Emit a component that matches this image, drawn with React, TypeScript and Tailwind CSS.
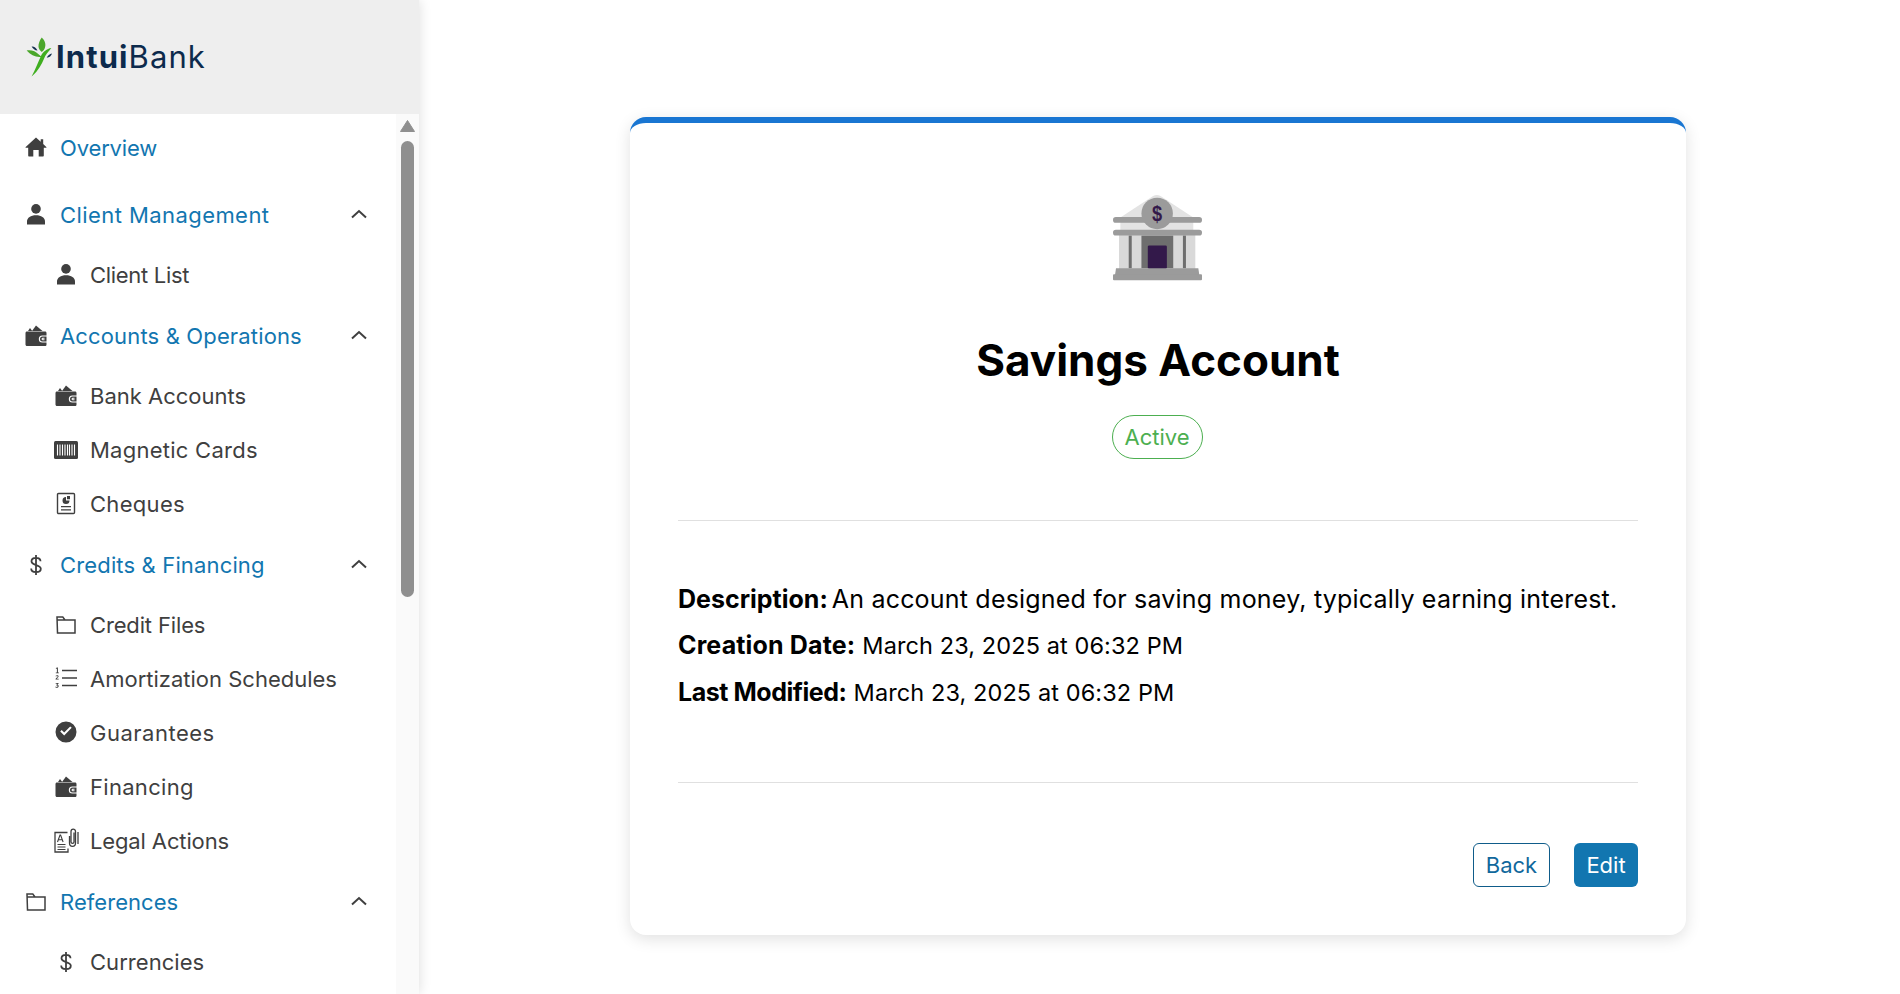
import React from "react";

const I = ({ children, w = 24, vb = "0 0 24 24" }: { children: React.ReactNode; w?: number; vb?: string }) => (
  <svg width={w} height={w} viewBox={vb} className="text-[#3f3f3f]" fill="currentColor">{children}</svg>
);
const Home = () => <I w={26}><path d="M12 2.500 1.700 11.900c-.4.4-.1.9.3.9H4.200v7.700c0 .6.400 1 1 1h4.100v-6.500h5.400v6.500h4.100c.6 0 1-.4 1-1V12.800h2.200c.4 0 .7-.5.3-.9l-3.100-2.800V4.200h-2.500v2.600Z" /></I>;
const Person = () => <I><circle cx="12" cy="6.900" r="4.800" /><path d="M3 22.500v-3.200c0-3.400 3.800-6 9-6s9 2.600 9 6v3.200Z" /></I>;
const Wallet = () => <I w={25}><path d="M4 7.500 6 4.500l2.300 3Z" /><path d="M8 7.500 12 2l6.500 5.500Z" /><path fillRule="evenodd" d="M3 8h18c1 0 1.500.6 1.500 1.500v2.500h-4.200a3.500 3.500 0 0 0 0 7h4.200v2c0 1-.6 1.500-1.500 1.500H3c-.9 0-1.500-.6-1.500-1.500V9.500C1.500 8.600 2.100 8 3 8Z" /><path fillRule="evenodd" d="M18.500 13h4v5h-4a2.500 2.500 0 0 1 0-5Zm.3 1.300a1.200 1.200 0 1 0 0 2.400h1.700v-.9h-1.700a.3.3 0 0 1 0-.6h1.700v-.9Z" /></I>;
const Barcode = () => (
  <svg width="24" height="18" viewBox="0 0 24 18" className="mt-[1px] text-[#3f3f3f]"><rect width="24" height="18" rx="1.500" fill="currentColor" /><path d="M3.500 3.500v11M6 3.500v11M8.500 3.500v11M11 3.500v11M13.500 3.500v11M15.500 3.500v11M18 3.500v11M20.500 3.500v11" stroke="#fff" strokeWidth="1.100" /></svg>
);
const Cheque = () => <I><g transform="translate(0 1)"><rect x="3.500" y="1.500" width="17" height="20" rx="1" fill="none" stroke="currentColor" strokeWidth="1.400" /><path d="M12 5a3.500 3.500 0 1 0 3.500 3.500H12Z" /><path d="M13 4h3v3.200h-3zM7 14h10v1.300H7zM7 17.200h10v1.300H7z" /></g></I>;
const Folder = () => <I><path d="M3.500 21h17.500V8H11L8.800 5H3Zm0-13H11" fill="none" stroke="currentColor" strokeWidth="1.500" /></I>;
const Dollar = () => <I><g transform="translate(0 1)"><path d="M16.500 8.200c0-2-1.900-3.400-4.500-3.400S7.500 6.200 7.500 8.300c0 4.600 9.300 2.900 9.300 7.500 0 2-2 3.400-4.800 3.400s-4.800-1.500-4.800-3.600M12 2v20" fill="none" stroke="currentColor" strokeWidth="1.800" /></g></I>;
const ListNum = () => <I vb="0 0 24 24"><path d="M8 3.800h15v1.500H8zM8 11.300h15v1.500H8zM8 18.800h15v1.500H8z" /><path d="M2.800 1.500h1.100v5h1v.8H1.800v-.8h1.100V2.600l-1 .3v-.7ZM1.700 9.800c.5-.6 2.700-.9 2.900.5.100 1-1.500 1.700-1.800 2.500h1.900v.8H1.500c0-1.800 2.100-2.300 2.100-3.200 0-.7-1.200-.5-1.900 0ZM1.700 17h2.900v.6l-1.200 1.200c1.900.2 1.700 3-.4 3-.6 0-1.100-.1-1.500-.4v-.8c1 .7 2.300.4 2.200-.5 0-.6-.8-.7-1.400-.6v-.6l1-1.100H1.700Z" /></I>;
const Check = () => <I><path fillRule="evenodd" d="M12 1.500a10.500 10.500 0 1 1 0 21 10.500 10.500 0 0 1 0-21Zm5.700 6.300-1.500-1.400-6 6-2.500-2.500-1.500 1.500 4 4Z" /></I>;
const Legal = () => (
  <svg width="25" height="25" viewBox="0 0 26 26" className="shrink-0 scale-[1.04] text-[#3f3f3f]" fill="none" stroke="currentColor"><path d="M14 5H1.500v19.500h13V21" strokeWidth="1.300" /><path d="M4 14.500 6.500 7.500h.6l2.500 7M5 12.200h3.500" strokeWidth="1.100" /><path d="M4 17h8M4 19.500h8M4 22h8" strokeWidth="1.200" /><path d="M16 8.500v7c0 4.500 6 4.500 6 0V4c0-3.200-4.500-3.200-4.500 0v10.500c0 1.700 3 1.700 3 0V5M24.500 4.500v12" strokeWidth="1.300" /></svg>
);
const Chevron = () => (
  <svg width="22" height="22" viewBox="0 0 22 22" fill="none" stroke="#3f3f3f" strokeWidth="2"><path d="m4 14.500 7-6.500 7 6.500" /></svg>
);

const Head = ({ icon, label, t, chevron = true }: { icon: React.ReactNode; label: string; t: string; chevron?: boolean }) => (
  <div className="flex h-[54px] items-center pl-[24px] pr-[26px]">
    <span className="flex w-[24px] justify-center">{icon}</span>
    <span className={`ml-[12px] pt-[2px] text-[#1276b0] text-[22px] ${t}`}>{label}</span>
    {chevron && <span className="ml-auto"><Chevron /></span>}
  </div>
);
const Sub = ({ icon, label, t }: { icon: React.ReactNode; label: string; t: string }) => (
  <div className="flex h-[54px] items-center pl-[54px]">
    <span className="flex w-[24px] justify-center">{icon}</span>
    <span className={`ml-[12px] pt-[2px] text-[#3f3f3f] text-[22px] ${t}`}>{label}</span>
  </div>
);
const Group = ({ icon, label, t, children }: { icon: React.ReactNode; label: string; t: string; children: React.ReactNode }) => (
  <div className="mb-[7px]">
    <Head icon={icon} label={label} t={t} />
    <div className="mt-[6px]">{children}</div>
  </div>
);

const Logo = () => (
  <div className="flex items-center pl-[25px]">
    <svg width="28" height="42" viewBox="40 48 85 125">
      <path d="M91 51c9 9 14 20 9 33-2 6-6 8-9 11-4-3-9-8-10-15-1-11 4-21 10-29Z" fill="#4aa62a" />
      <path d="M45 91c13-3 27 2 37 12 3 3 6 5 9 7-17 3-33-5-46-19Z" fill="#4aa62a" />
      <path d="M120 83c-14 2-25 11-32 25-7 16-16 39-28 62 22-19 31-40 37-53 5-14 14-23 23-34Z" fill="#3fae1f" />
      <path d="M60 79c7-1 13 3 18 12-8 0-14-5-18-12ZM122 100c-2 7-8 12-16 13 3-7 9-12 16-13Z" fill="#15304f" />
    </svg>
    <span className="ml-[3px] text-[31px] text-[#0c2a4c] tracking-[1.1px]"><b className="font-bold">Intui</b><span className="font-normal">Bank</span></span>
  </div>
);

const Bank = () => (
  <svg width="89" height="87" viewBox="190 70 266 260">
    <path d="M212 140 310 76q11-6 22 0l98 64v40H212Z" fill="#e3e3e3" />
    <rect x="208" y="190" width="228" height="104" fill="#d9d9d9" />
    <path d="M237 194h9v98h-9ZM399 194h9v98h-9ZM275 194h95v98h-95Z" fill="#6e6e6e" />
    <rect x="294" y="224" width="57" height="70" rx="4" fill="#33194a" />
    <rect x="190" y="139" width="266" height="17" rx="8.500" fill="#9b9b9b" />
    <rect x="190" y="177" width="266" height="17" rx="8.500" fill="#9b9b9b" />
    <circle cx="322" cy="128" r="47" fill="#9b9b9b" />
    <text transform="translate(322 151) scale(0.8 1)" textAnchor="middle" fontSize="68" fontWeight="700" fill="#33194a" fontFamily="'Liberation Sans', sans-serif">$</text>
    <path d="M199 292h246l3 20H196Z" fill="#9b9b9b" />
    <rect x="190" y="310" width="266" height="18" rx="3" fill="#9b9b9b" />
  </svg>
);

export default function App() {
  return (
    <div className="flex h-screen overflow-hidden bg-white font-['Inter',sans-serif]">
      <aside className="flex w-[419px] shrink-0 flex-col shadow-[0_0_12px_rgba(0,0,0,0.14)]">
        <div className="flex h-[114px] shrink-0 items-center bg-[#eeeeee]"><Logo /></div>
        <div className="flex min-h-0 flex-1">
          <nav className="w-[396px] shrink-0 overflow-hidden pt-[6px]">
            <div className="mb-[13px]"><Head icon={<Home />} label="Overview" t="tracking-[-0.15px]" chevron={false} /></div>
            <Group icon={<Person />} label="Client Management" t="tracking-[0.43px]">
              <Sub icon={<Person />} label="Client List" t="tracking-[-0.3px]" />
            </Group>
            <Group icon={<Wallet />} label="Accounts & Operations" t="tracking-[0.15px]">
              <Sub icon={<Wallet />} label="Bank Accounts" t="tracking-[0px]" />
              <Sub icon={<Barcode />} label="Magnetic Cards" t="tracking-[0.25px]" />
              <Sub icon={<Cheque />} label="Cheques" t="tracking-[0.3px]" />
            </Group>
            <Group icon={<Dollar />} label="Credits & Financing" t="tracking-[0.15px]">
              <Sub icon={<Folder />} label="Credit Files" t="tracking-[-0.15px]" />
              <Sub icon={<ListNum />} label="Amortization Schedules" t="tracking-[0px]" />
              <Sub icon={<Check />} label="Guarantees" t="tracking-[0.5px]" />
              <Sub icon={<Wallet />} label="Financing" t="tracking-[0.3px]" />
              <Sub icon={<Legal />} label="Legal Actions" t="tracking-[-0.13px]" />
            </Group>
            <Group icon={<Folder />} label="References" t="tracking-[0.05px]">
              <Sub icon={<Dollar />} label="Currencies" t="tracking-[0.05px]" />
            </Group>
          </nav>
          <div className="flex w-[23px] flex-col items-center bg-[#fafafa] pt-[6px]">
            <svg width="15" height="12" viewBox="0 0 15 12"><path d="M7.500 0.500 14.500 11.500H.5Z" fill="#8f8f8f" stroke="#8f8f8f" strokeLinejoin="round" /></svg>
            <div className="mt-[9px] h-[456px] w-[13px] rounded-full bg-[#8f8f8f]" />
          </div>
        </div>
      </aside>
      <main className="flex flex-1 justify-center pr-[3px] pt-[117px]">
        <section className="flex h-[818px] w-[1056px] flex-col rounded-[16px] border-t-[6px] border-[#1976d2] bg-white px-[48px] shadow-[0_4px_16px_rgba(0,0,0,0.12)]">
          <div className="mt-[71px] flex justify-center pr-[2px]"><Bank /></div>
          <h1 className="mt-[49px] text-center text-[44px] leading-[60px] font-bold text-black">Savings Account</h1>
          <div className="mt-[25px] flex justify-center pr-[2px]">
            <span className="flex h-[44px] w-[91px] items-center justify-center rounded-[22px] border border-[#4caf50] text-[22px] text-[#4caf50]">Active</span>
          </div>
          <div className="mt-[61px] border-t border-[#e0e0e0]" />
          <div className="mt-[60px] flex flex-col gap-[10px] text-[25px] leading-[36px] text-black">
            <p><b className="font-bold">Description:</b> <span className="-ml-[3px] tracking-[0.2px]">An account designed for saving money, typically earning interest.</span></p>
            <p><b className="font-bold tracking-[0.15px]">Creation Date:</b> <span className="text-[23.500px] tracking-[0.1px]">March 23, 2025 at 06:32 PM</span></p>
            <p><b className="font-bold tracking-[-0.45px]">Last Modified:</b> <span className="text-[23.500px] tracking-[0.1px]">March 23, 2025 at 06:32 PM</span></p>
          </div>
          <div className="mt-[71px] border-t border-[#e0e0e0]" />
          <div className="mt-[60px] flex justify-end gap-[24px]">
            <button className="h-[44px] w-[77px] rounded-[6px] border border-[#0f5c8a] text-[22px] text-[#11689c]">Back</button>
            <button className="h-[44px] w-[64px] rounded-[6px] bg-[#1276b0] text-[22px] text-white">Edit</button>
          </div>
        </section>
      </main>
    </div>
  );
}
